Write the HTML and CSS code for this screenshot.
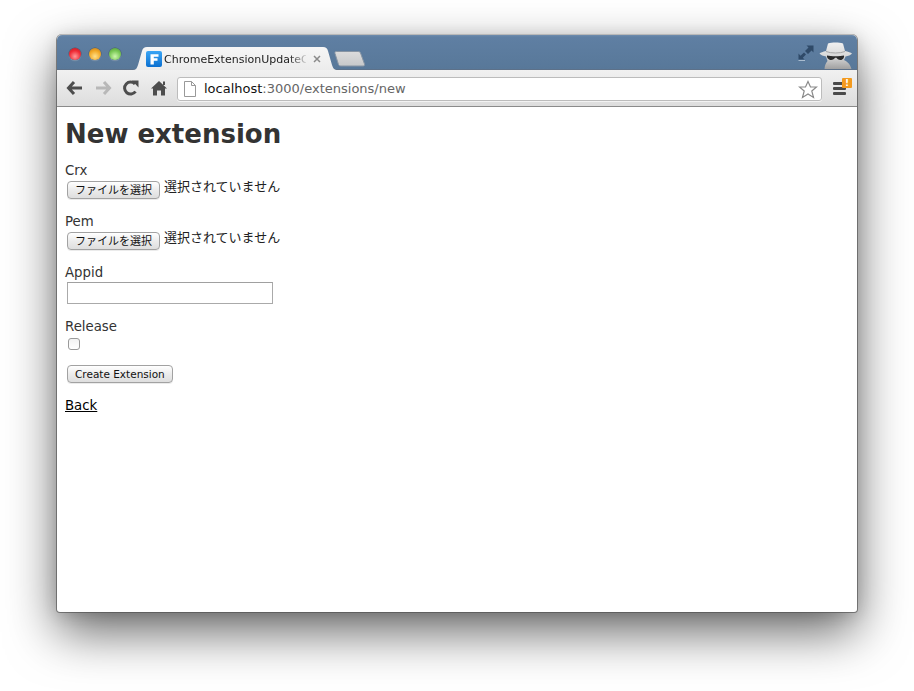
FILE: index.html
```html
<!DOCTYPE html>
<html lang="ja">
<head>
<meta charset="utf-8">
<title>New extension</title>
<link rel="stylesheet" href="styles.css">
</head>
<body>
<div class="window">
  <div class="titlebar">
    <div class="lights">
      <span class="light red"></span>
      <span class="light yellow"></span>
      <span class="light green"></span>
    </div>
    <div class="tab">
      <svg class="tab-shape" width="205" height="24" viewBox="0 0 205 24"><defs><linearGradient id="tabg" x1="0" y1="0" x2="0" y2="1"><stop offset="0" stop-color="#f6f6f6"/><stop offset="1" stop-color="#ececec"/></linearGradient></defs><path d="M0 24C3 24 4 22 5 19L9 5C10 2 11 1 14 1H190C193 1 194 2 195 5L199 19C200 22 201 24 205 24Z" fill="url(#tabg)"/></svg>
      <svg class="favicon" width="16" height="16" viewBox="0 0 16 16"><defs><linearGradient id="favg" x1="0" y1="0" x2="0" y2="1"><stop offset="0" stop-color="#3aa5f5"/><stop offset="1" stop-color="#0a6fd0"/></linearGradient></defs><rect width="16" height="16" rx="2" fill="url(#favg)"/><path d="M4.500 3.200H12.500V5.800H7.800V7.300H11.500V9.700H7.800V13.500H4.500Z" fill="#fff"/></svg>
      <span class="tab-title">ChromeExtensionUpdateC</span>
      <svg class="tab-close" width="8" height="8" viewBox="0 0 8 8"><path d="M1 1L7 7M7 1L1 7" stroke="#8a8a8a" stroke-width="1.500"/></svg>
    </div>
    <svg class="newtab" width="32" height="17" viewBox="0 0 32 17"><defs><linearGradient id="ntg" x1="0" y1="0" x2="0" y2="1"><stop offset="0" stop-color="#dcdcdc"/><stop offset="1" stop-color="#c6c8ca"/></linearGradient></defs><path d="M2.500 1.500H24C25.500 1.500 26 2 26.500 3L30.500 14C31 15.500 30 16 29 16H7C5.500 16 5 15.500 4.500 14.500L1 3.500C.6 2 1.200 1.500 2.500 1.500Z" fill="url(#ntg)" stroke="#8794a3"/></svg>
    <div class="spacer"></div>
    <svg class="fullscreen" width="16" height="16" viewBox="0 0 16 16"><path d="M8.500 .5H15.500V7.500L13.500 5.500L10 9L7 6L10.500 2.500Z" fill="#2f4a68"/><path d="M.5 8.500V14.500H6.500L4.800 12.800L8 9.500L6 7.500L2.500 10.800Z" fill="#2f4a68"/><path d="M.5 15.500H7" stroke="#a9bccf"/></svg>
    <svg class="spy" width="36" height="27" viewBox="0 0 36 27"><defs><linearGradient id="spyg" x1="0" y1="0" x2="0" y2="1"><stop offset="0" stop-color="#f0f0f0"/><stop offset=".55" stop-color="#d6d6d6"/><stop offset="1" stop-color="#a0a0a0"/></linearGradient></defs><path d="M10 1.500C14 .3 21 .3 25 1.500L27 9C30 9.700 33 10.500 34 11.500C33 13 30 14 27.500 14.500C27 16 26.500 17 26 18C28 19 32 21 33.500 27H6.500C6.800 23 8 21 9.500 19C9 17.500 8.500 16 8 14.500C5.500 14 2.500 13 1.500 11.500C2.500 10.500 5 9.700 8 9Z" fill="url(#spyg)"/><path d="M9 13.500C13 14.500 22 14.500 26 13.500C26.500 15.500 25 18 22.500 18C20.500 18 19 16.800 18.500 15.800H17C16.500 16.800 15 18 13 18C10.500 18 8.500 15.500 9 13.500Z" fill="#2a2a2a"/><path d="M8 9.500C13 11.500 22 11.500 27 9.500" stroke="#a5a5a5" fill="none"/></svg>
  </div>
  <div class="toolbar">
    <button class="nav" type="button" aria-label="Back">
      <svg width="18" height="16" viewBox="0 0 18 16"><path d="M8 2L2.500 8L8 14M3 8H16" fill="none" stroke="#4d4d4d" stroke-width="3"/></svg>
    </button>
    <button class="nav" type="button" aria-label="Forward">
      <svg width="18" height="16" viewBox="0 0 18 16"><path d="M10 2L15.500 8L10 14M15 8H2" fill="none" stroke="#b8b8b8" stroke-width="3"/></svg>
    </button>
    <button class="nav" type="button" aria-label="Reload">
      <svg width="18" height="16" viewBox="0 0 18 16"><path d="M13.500 11.500A6 6 0 1 1 13 4" fill="none" stroke="#4d4d4d" stroke-width="3"/><path d="M10 .5H16.500V7.500Z" fill="#4d4d4d"/></svg>
    </button>
    <button class="nav" type="button" aria-label="Home">
      <svg width="18" height="16" viewBox="0 0 18 16"><path d="M9 1L17 8.500H15V15.500H11V10.500H7V15.500H3V8.500H1Z" fill="#4d4d4d"/><path d="M13 1.500H15V5H13Z" fill="#4d4d4d"/></svg>
    </button>
    <div class="omnibox">
      <svg class="page-icon" width="12" height="16" viewBox="0 0 12 16"><path d="M.5 .5H7.500L11.500 4.500V15.500H.5Z M7.500 .5V4.500H11.500" fill="#fff" stroke="#999"/></svg>
      <span class="url"><span class="host">localhost</span>:3000/extensions/new</span>
      <svg class="star" width="20" height="19" viewBox="0 0 20 19"><path d="M10 1.500L12.500 7H18.500L13.800 11L15.500 17.500L10 14L4.500 17.500L6.200 11L1.500 7H7.500Z" fill="#fff" stroke="#8a8a8a" stroke-width="1.200"/></svg>
    </div>
    <div class="menu">
      <span class="bar"></span><span class="bar"></span><span class="bar"></span>
      <span class="badge">!</span>
    </div>
  </div>
  <main class="page">
    <h1>New extension</h1>
    <div class="field">
      <label>Crx</label>
      <div class="control"><button class="btn jp" type="button">ファイルを選択</button><span class="nofile">選択されていません</span></div>
    </div>
    <div class="field">
      <label>Pem</label>
      <div class="control"><button class="btn jp" type="button">ファイルを選択</button><span class="nofile">選択されていません</span></div>
    </div>
    <div class="field tight">
      <label>Appid</label>
      <div class="control"><input class="text" type="text"></div>
    </div>
    <div class="field">
      <label>Release</label>
      <div class="control"><span class="check"></span></div>
    </div>
    <div class="actions"><button class="btn" type="button">Create Extension</button></div>
    <a class="back" href="#">Back</a>
  </main>
</div>
</body>
</html>
```
FILE: styles.css
```css
* { box-sizing: border-box; }
html, body { margin: 0; height: 100%; background: #fff; overflow: hidden; }
body { padding: 35px 57px 0; font-family: "DejaVu Sans", Verdana, sans-serif; }

.window {
  width: 800px;
  height: 577px;
  display: flex;
  flex-direction: column;
  background: #fff;
  border-radius: 5px 5px 3px 3px;
  box-shadow: 0 -1px 0 #b8b8b8, 0 0 0 1px rgba(80,80,80,.65), 0 2px 16px rgba(0,0,0,.14), 0 20px 50px rgba(0,0,0,.6);
  overflow: hidden;
}

.titlebar {
  height: 35px;
  flex: none;
  display: flex;
  align-items: flex-start;
  background: linear-gradient(#6f8cad 0, #5f7fa3 2px, #587899 100%);
  border-bottom: 1px solid #5d7189;
}
.lights { display: flex; gap: 8px; padding: 13px 0 0 12px; width: 76px; flex: none; }
.light { width: 12px; height: 12px; border-radius: 50%; box-shadow: 0 1px 1px rgba(255,255,255,.3), 0 0 0 .5px rgba(40,50,60,.5); }
.red { background: radial-gradient(circle at 50% 70%, #ff9a9a 0, #f02a35 55%, #b81a20 100%); }
.yellow { background: radial-gradient(circle at 50% 70%, #ffe08a 0, #f2a825 55%, #b9761a 100%); }
.green { background: radial-gradient(circle at 50% 70%, #cdf7ae 0, #78c854 55%, #4e9333 100%); }

.tab {
  position: relative;
  width: 205px;
  height: 24px;
  margin-top: 11px;
  display: flex;
  align-items: center;
  padding: 1px 0 0 13px;
  flex: none;
}
.tab-shape { position: absolute; left: 0; top: 0; }
.favicon, .tab-title, .tab-close { position: relative; }
.favicon { flex: none; }
.tab-title {
  width: 142px;
  margin: 2px 0 0 2px;
  font: 11px "DejaVu Sans", sans-serif;
  color: #222;
  white-space: nowrap;
  -webkit-mask-image: linear-gradient(to right, #000 88%, rgba(0,0,0,.15));
  mask-image: linear-gradient(to right, #000 88%, rgba(0,0,0,.15));
}
.tab-close { margin-left: 7px; flex: none; }
.newtab { margin: 15px 0 0 -4px; flex: none; }
.spacer { flex: 1; }
.fullscreen { margin: 10px 4px 0 0; flex: none; }
.spy { margin: 7px 3px 0 0; flex: none; }

.toolbar {
  height: 37px;
  flex: none;
  display: flex;
  align-items: center;
  padding: 2px 7px 0 9px;
  background: linear-gradient(#f1f1f1, #dddddd);
  border-bottom: 1px solid #8b8b8b;
}
.nav { width: 18px; height: 16px; padding: 0; margin: 0 10px 2px 0; border: 0; background: none; display: block; flex: none; }
.nav svg { display: block; }
.nav:last-of-type { margin-right: 9px; }

.omnibox {
  width: 645px;
  height: 24px;
  flex: none;
  display: flex;
  align-items: center;
  padding: 0 3px 0 6px;
  background: #fff;
  border: 1px solid #bcbcbc;
  border-radius: 3px;
  box-shadow: 0 1px 0 rgba(255,255,255,.6);
}
.page-icon { flex: none; }
.url { flex: 1; margin: 0 0 2px 8px; font: 13px "DejaVu Sans", sans-serif; color: #666; white-space: nowrap; }
.host { color: #111; }
.star { flex: none; }

.menu { position: relative; width: 16px; height: 14px; margin: 0 0 2px 11px; display: flex; flex-direction: column; gap: 2px; padding-top: 1px; flex: none; }
.bar { display: block; width: 13px; height: 3px; background: #4a4a4a; border-radius: 1px; }
.badge {
  position: absolute;
  right: -3px;
  top: -3px;
  width: 10px;
  height: 10px;
  background: #f39a1e;
  border-radius: 1px;
  color: #fff;
  font: bold 9px/10px "DejaVu Sans", sans-serif;
  text-align: center;
}

.page { flex: 1; padding: 11px 8px 0; color: #333; font-size: 13.3px; line-height: 18px; }
h1 { margin: 0 0 11px; font-size: 26px; line-height: 33px; font-weight: bold; color: #333; }
.field { margin-bottom: 14px; }
.field label { display: block; height: 19px; color: #333; }
.field.tight label { height: 18px; }
.control { display: flex; align-items: flex-start; padding-left: 2px; }

.btn {
  height: 18px;
  padding: 0 7px;
  font: 10.5px/16px "DejaVu Sans", sans-serif;
  color: #111;
  background: linear-gradient(#ffffff, #ececec 50%, #dedede);
  border: 1px solid #a2a2a2;
  border-radius: 4px;
  box-shadow: 0 1px 0 rgba(0,0,0,.08);
  white-space: nowrap;
}
.btn.jp { font: 11px/14px "Noto Sans CJK JP", sans-serif; padding-bottom: 2px; }
.nofile { margin: -4px 0 0 4px; font: 13px/18px "Noto Sans CJK JP", sans-serif; color: #222; }
.text { display: block; width: 206px; height: 22px; padding: 0; border: 1px solid #aaa; border-top-color: #a0a0a0; background: #fff; }
.check {
  display: block;
  width: 12px;
  height: 12px;
  margin: 1px 0 1px 1px;
  border: 1px solid #9a9a9a;
  border-radius: 3px;
  background: linear-gradient(#f2f2f2, #ffffff);
}
.actions { padding-left: 2px; height: 18px; margin-bottom: 14px; }
.actions .btn { display: block; }
.back { color: #000; text-decoration: underline; display: inline-block; }
```
